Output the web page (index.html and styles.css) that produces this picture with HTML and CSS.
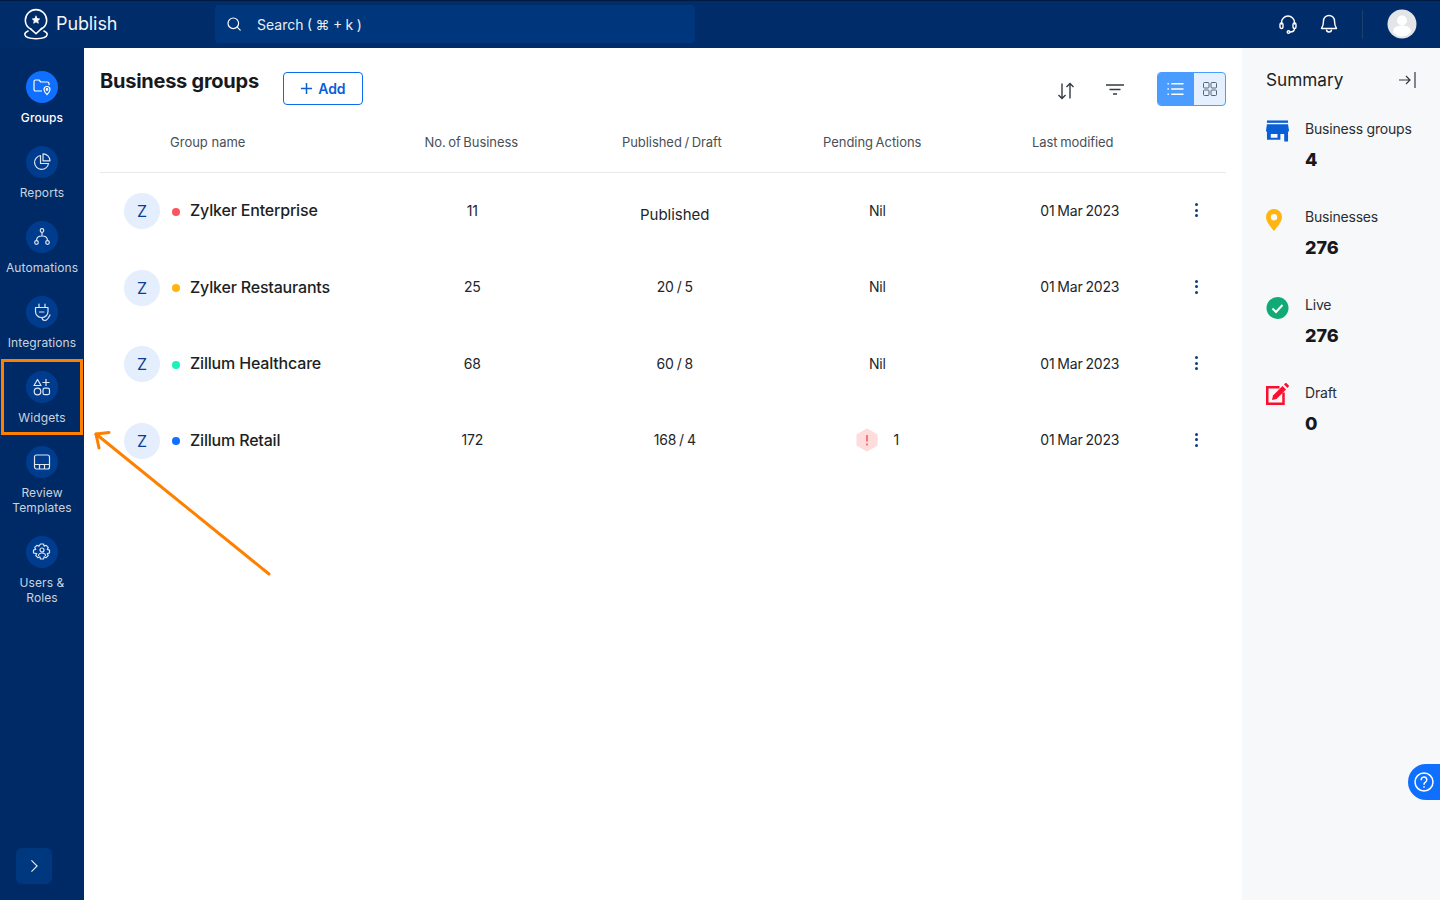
FILE: index.html
```html
<!DOCTYPE html>
<html lang="en">
<head>
<meta charset="utf-8">
<title>Publish - Business groups</title>
<link rel="stylesheet" href="styles.css">
</head>
<body>
<header class="topbar">
  <div class="brand">
    <svg class="logo" viewBox="0 0 28 34" fill="none" stroke="#fff" stroke-width="1.7" stroke-linecap="round" stroke-linejoin="round"><path d="M8.5 22.5C4.5 20.5 2.5 17 2.5 13A11.5 11.5 0 0 1 25.500 13c0 4-2 7.500-6 9.500"/><path d="M8.500 22.500 14 27.500l6.500-6"/><path d="M5.500 24.500C3 25.500 1.800 27 2 28.500c.5 2.800 6 4.300 12 4.300s11.500-1.500 12-4.300c.2-1.500-1-3-3.500-4"/><path d="m14 8.500 1.200 2.700 2.800.3-2.100 1.900.6 2.800-2.500-1.500-2.500 1.500.6-2.800-2.100-1.900 2.800-.3z" fill="#fff" stroke-width=".8"/></svg>
    <span class="brand-name">Publish</span>
  </div>
  <div class="search">
    <svg class="search-icon" viewBox="0 0 16 16" fill="none" stroke="#fff" stroke-width="1.2" stroke-linecap="round"><circle cx="7.300" cy="7.300" r="5.300"/><path d="m11.200 11.200 3 3"/></svg>
    <span>Search ( ⌘ + k )</span>
  </div>
  <div class="top-actions">
    <svg class="top-icon" viewBox="0 0 18 20" fill="none" stroke="#fff" stroke-width="1.400" stroke-linecap="round"><path d="M2.500 10V8.500a6.500 6.500 0 0 1 13 0V10"/><rect x="1" y="9" width="3" height="5.500" rx="1.500"/><rect x="14" y="9" width="3" height="5.500" rx="1.500"/><path d="M15.500 14.500c0 2.500-2 3.500-4.500 3.500"/><circle cx="9.500" cy="18" r="1.300"/></svg>
    <svg class="top-icon bell" viewBox="0 0 18 20" fill="none" stroke="#fff" stroke-width="1.400" stroke-linejoin="round"><path d="M9 1.500a5.500 5.500 0 0 0-5.500 5.500c0 4-.6 5.500-2 7.500h15c-1.400-2-2-3.500-2-7.500A5.500 5.500 0 0 0 9 1.500Z"/><path d="M6.500 15.500a2.500 2.500 0 0 0 5 0"/></svg>
    <span class="top-divider"></span>
    <svg class="avatar-top" viewBox="0 0 30 30"><circle cx="15" cy="15" r="14.500" fill="#e3e5e9"/><circle cx="15" cy="11.500" r="5" fill="#fff"/><path d="M6 23c0-4.500 4-6.500 9-6.500s9 2 9 6.500c-2.500 3-5.500 4.500-9 4.500S8.500 26 6 23Z" fill="#fff"/></svg>
  </div>
</header>

<div class="shell">
  <nav class="sidebar">
    <a class="nav-item active">
      <span class="nav-circle"><svg viewBox="0 0 20 20" fill="none" stroke="#fff" stroke-width="1.200" stroke-linejoin="round"><path d="M10 14H3.500A1.500 1.500 0 0 1 2 12.500v-8A1.500 1.500 0 0 1 3.500 3H7l1.800 2h6.700A1.500 1.500 0 0 1 17 6.500V8"/><path d="M15 9.500a3 3 0 0 0-3 3c0 2 3 5 3 5s3-3 3-5a3 3 0 0 0-3-3Z"/><circle cx="15" cy="12.500" r=".8"/></svg></span>
      <span class="nav-label">Groups</span>
    </a>
    <a class="nav-item">
      <span class="nav-circle"><svg viewBox="0 0 20 20" fill="none" stroke="#dfe6f0" stroke-width="1.200" stroke-linejoin="round"><path d="M8.500 3.500a7 7 0 1 0 8 8h-8z"/><path d="M11 1.800a7 7 0 0 1 7 7h-7z"/></svg></span>
      <span class="nav-label">Reports</span>
    </a>
    <a class="nav-item">
      <span class="nav-circle"><svg viewBox="0 0 20 20" fill="none" stroke="#dfe6f0" stroke-width="1.200"><circle cx="10" cy="3.500" r="1.800"/><circle cx="4.500" cy="15.500" r="1.800"/><circle cx="15.500" cy="15.500" r="1.800"/><path d="M10 5.300V9M4.500 13.700c0-3 2-4.700 5.500-4.700s5.500 1.700 5.500 4.700"/></svg></span>
      <span class="nav-label">Automations</span>
    </a>
    <a class="nav-item">
      <span class="nav-circle"><svg viewBox="0 0 20 20" fill="none" stroke="#dfe6f0" stroke-width="1.200" stroke-linecap="round"><path d="M7 2v3.500M13 2v3.500M3.500 5.500h12.500v4a6 6 0 0 1-6 6h-.5a6 6 0 0 1-6-6z" stroke-linejoin="round"/><path d="M7.500 10h4.500"/><path d="M10 15.500c0 2.500 1.500 3 3 3s3-1.500 5-5.500"/></svg></span>
      <span class="nav-label">Integrations</span>
    </a>
    <a class="nav-item highlighted">
      <span class="nav-circle"><svg viewBox="0 0 20 20" fill="none" stroke="#dfe6f0" stroke-width="1.200" stroke-linejoin="round"><path d="M5.500 2.500 9 8.500H2z"/><path d="M14 2v7M10.500 5.500h7"/><circle cx="5.500" cy="14.500" r="3.300"/><rect x="11" y="11.200" width="6.500" height="6.500" rx="1.800"/></svg></span>
      <span class="nav-label">Widgets</span>
    </a>
    <a class="nav-item">
      <span class="nav-circle"><svg viewBox="0 0 20 20" fill="none" stroke="#dfe6f0" stroke-width="1.200"><rect x="2.500" y="3" width="15" height="14" rx="2"/><path d="M2.500 12.500h15M7.500 12.500V17M12.500 12.500V17"/></svg></span>
      <span class="nav-label">Review Templates</span>
    </a>
    <a class="nav-item">
      <span class="nav-circle"><svg viewBox="0 0 20 20" fill="none" stroke="#dfe6f0" stroke-width="1.200" stroke-linejoin="round"><path d="M8.500 2h3l.6 2.200 2-.9 2.100 2.100-.9 2 2.200.6v3l-2.200.6.900 2-2.100 2.100-2-.9-.6 2.200h-3l-.6-2.200-2 .9-2.100-2.100.9-2L1.500 11V8l2.200-.6-.9-2 2.100-2.100 2 .9z"/><circle cx="10" cy="8" r="2"/><path d="M6.500 14c0-2 1.500-3 3.500-3s3.500 1 3.500 3"/></svg></span>
      <span class="nav-label">Users &amp; Roles</span>
    </a>
    <button class="expand" type="button" aria-label="Expand"><svg viewBox="0 0 10 16" fill="none" stroke="#e8edf5" stroke-width="1.300"><path d="m1.500 1.500 6.500 6.500-6.500 6.500"/></svg></button>
  </nav>

  <main class="content">
    <div class="toolbar">
      <h1 class="title">Business groups</h1>
      <button class="add" type="button"><svg viewBox="0 0 14 14" fill="none" stroke="#0a5fd6" stroke-width="1.600"><path d="M7 1v12M1 7h12"/></svg>Add</button>
      <div class="tools">
        <svg class="sort" viewBox="0 0 18 18" fill="none" stroke="#333a45" stroke-width="1.400"><path d="M5 1.500v15M1.500 13 5 16.500 8.500 13M13 16.500v-15M9.500 5 13 1.500 16.500 5"/></svg>
        <svg class="filter" viewBox="0 0 18 12" fill="none" stroke="#333a45" stroke-width="1.500"><path d="M0 1h18M3.500 5.500h11M7 10h4"/></svg>
        <div class="toggle">
          <span class="toggle-btn on"><svg viewBox="0 0 18 14" fill="none" stroke="#fff" stroke-width="1.500"><path d="M4.500 1.500H17.500M4.500 7H17.500M4.500 12.500H17.500M.5 1.500h1.500M.5 7h1.500M.5 12.500h1.500"/></svg></span>
          <span class="toggle-btn"><svg viewBox="0 0 14 14" fill="none" stroke="#5a6470" stroke-width="1"><rect x=".5" y=".5" width="5.500" height="5.500" rx="1"/><rect x="8" y=".5" width="5.500" height="5.500" rx="1"/><rect x=".5" y="8" width="5.500" height="5.500" rx="1"/><rect x="8" y="8" width="5.500" height="5.500" rx="1"/></svg></span>
        </div>
      </div>
    </div>

    <div class="table-head">
      <span class="head-name">Group name</span>
      <span>No. of Business</span>
      <span>Published / Draft</span>
      <span>Pending Actions</span>
      <span>Last modified</span>
    </div>

    <div class="row">
      <div class="name-cell"><span class="initial">Z</span><span class="dot red"></span><span class="name">Zylker Enterprise</span></div>
      <span class="cell">11</span>
      <span class="cell published">Published</span>
      <span class="cell">Nil</span>
      <span class="cell">01 Mar 2023</span>
      <span class="more"><i></i><i></i><i></i></span>
    </div>
    <div class="row">
      <div class="name-cell"><span class="initial">Z</span><span class="dot amber"></span><span class="name">Zylker Restaurants</span></div>
      <span class="cell">25</span>
      <span class="cell">20 / 5</span>
      <span class="cell">Nil</span>
      <span class="cell">01 Mar 2023</span>
      <span class="more"><i></i><i></i><i></i></span>
    </div>
    <div class="row">
      <div class="name-cell"><span class="initial">Z</span><span class="dot mint"></span><span class="name">Zillum Healthcare</span></div>
      <span class="cell">68</span>
      <span class="cell">60 / 8</span>
      <span class="cell">Nil</span>
      <span class="cell">01 Mar 2023</span>
      <span class="more"><i></i><i></i><i></i></span>
    </div>
    <div class="row">
      <div class="name-cell"><span class="initial">Z</span><span class="dot blue"></span><span class="name">Zillum Retail</span></div>
      <span class="cell">172</span>
      <span class="cell">168 / 4</span>
      <span class="cell pending"><svg viewBox="0 0 22 24"><path d="M11 .5 21.500 6.300v11.400L11 23.500.5 17.700V6.300z" fill="#ffdcdc"/><path d="M11 7v6.500M11 15.500v2" stroke="#f9505a" stroke-width="1.500" fill="none"/></svg><span>1</span></span>
      <span class="cell">01 Mar 2023</span>
      <span class="more"><i></i><i></i><i></i></span>
    </div>
  </main>

  <aside class="summary">
    <div class="summary-head">
      <h2>Summary</h2>
      <svg viewBox="0 0 17 16" fill="none" stroke="#333a45" stroke-width="1.200"><path d="M0 8h11M7 4l4 4-4 4M16 0v16"/></svg>
    </div>
    <div class="stat">
      <svg class="stat-icon store" viewBox="0 0 24 22"><path d="M1 0h22v2.500H1z" fill="#0a5fd6"/><path d="M1 4h22l1 6.500c0 1-.8 1.500-1.500 1.500H1.500C.8 12 0 11.500 0 10.500z" fill="#0a5fd6"/><path fill-rule="evenodd" d="M1 11h22v11h-4v-8h-4v6H1zm4 3v4h7v-4z" fill="#0a5fd6"/></svg>
      <div><div class="stat-label">Business groups</div><div class="stat-value">4</div></div>
    </div>
    <div class="stat">
      <svg class="stat-icon pin" viewBox="0 0 16 22"><path fill-rule="evenodd" d="M8 0a8 8 0 0 0-8 8c0 5 5 10 8 14 3-4 8-9 8-14a8 8 0 0 0-8-8Zm0 5a3.200 3.200 0 1 1 0 6.400A3.200 3.200 0 0 1 8 5Z" fill="#ffb511"/></svg>
      <div><div class="stat-label">Businesses</div><div class="stat-value">276</div></div>
    </div>
    <div class="stat">
      <svg class="stat-icon" viewBox="0 0 22 22"><circle cx="11" cy="11" r="11" fill="#10ab74"/><path d="m6 11.500 3.500 3.500 6.500-7" fill="none" stroke="#fff" stroke-width="2"/></svg>
      <div><div class="stat-label">Live</div><div class="stat-value">276</div></div>
    </div>
    <div class="stat">
      <svg class="stat-icon draft" viewBox="0 0 23 23"><path d="M13.500 4.250H1.250V20.750H17.500V9.500" fill="none" stroke="#fb0f2f" stroke-width="2.500"/><path d="m6 17 1-4.500L16.500 3l3.500 3.500L10.500 16z" fill="#fb0f2f"/><path d="M18 1.500 19.200.3c.4-.4 1-.4 1.400 0l2 2c.4.4.4 1 0 1.400L21.500 5z" fill="#fb0f2f"/></svg>
      <div><div class="stat-label">Draft</div><div class="stat-value">0</div></div>
    </div>
  </aside>
</div>

<svg class="arrow" viewBox="0 0 180 150" fill="none" stroke="#ff8000" stroke-width="3" stroke-linecap="round" stroke-linejoin="round"><path d="M175 143 2 3"/><path d="M15 1.500 2 3l3 14"/></svg>
<button class="help" type="button" aria-label="Help"><svg viewBox="0 0 20 20" fill="none" stroke="#fff" stroke-width="1.500"><circle cx="10" cy="10" r="9"/><path d="M7.200 7.800a2.800 2.800 0 1 1 4.300 2.300c-1 .6-1.500 1.100-1.500 2.200" stroke-linecap="round"/><path d="M10 14.200v1.500"/></svg></button>
</body>
</html>
```

FILE: styles.css
```css
*, *::before, *::after { box-sizing: border-box; }
html, body { margin: 0; height: 100%; }
body {
  font-family: Inter, "Noto Sans", "Liberation Sans", sans-serif;
  color: #1c1f24;
  background: #fff;
  overflow: hidden;
  height: 900px;
  display: flex;
  flex-direction: column;
}
h1, h2 { margin: 0; }
button { font-family: inherit; cursor: pointer; }

/* Top bar */
.topbar {
  height: 48px;
  flex: none;
  display: flex;
  align-items: center;
  background: #002d69;
  border-top: 1px solid #001b42;
  padding-bottom: 1px;
  color: #fff;
}
.brand {
  width: 215px;
  display: flex;
  align-items: center;
  padding-left: 23px;
  flex: none;
}
.logo { width: 26px; height: 32px; flex: none; }
.brand-name { margin: 0 0 1px 7px; font-size: 18px; letter-spacing: -0.1px; color: #f1f4f8; }
.search {
  width: 480px;
  height: 38px;
  background: #00367c;
  border-radius: 4px;
  display: flex;
  align-items: center;
  padding-left: 11px;
  font-size: 14px;
  word-spacing: -0.5px;
  color: #e9eef5;
  flex: none;
}
.search-icon { width: 16px; height: 16px; margin-right: 15px; }
.top-actions {
  margin-left: auto;
  display: flex;
  align-items: center;
  padding-right: 23px;
}
.top-icon { width: 18px; height: 20px; }
.bell { margin-left: 23px; }
.top-divider { width: 1px; height: 29px; background: #1c3f70; margin: 0 24px; }
.avatar-top { width: 30px; height: 30px; }

/* Shell */
.shell { flex: 1; display: flex; min-height: 0; }

/* Sidebar */
.sidebar {
  width: 84px;
  flex: none;
  background: #002a66;
  padding-top: 23px;
  display: flex;
  flex-direction: column;
  align-items: center;
}
.nav-item {
  position: relative;
  width: 84px;
  padding: 0 6px 21px;
  display: flex;
  flex-direction: column;
  align-items: center;
  text-align: center;
}
.nav-circle {
  width: 32px;
  height: 32px;
  border-radius: 50%;
  background: #003c8e;
  display: flex;
  align-items: center;
  justify-content: center;
}
.nav-circle svg { width: 20px; height: 20px; }
.nav-label {
  margin-top: 7px;
  font-size: 12px;
  line-height: 15px;
  letter-spacing: 0.1px;
  color: #cbd3df;
}
.nav-item:nth-child(3) { padding-left: 0; padding-right: 0; }
.active .nav-circle { background: #0f6fff; }
.active .nav-label { color: #fff; font-weight: 500; }
.highlighted::after {
  content: "";
  position: absolute;
  left: 1px;
  top: -12px;
  width: 82px;
  height: 76px;
  border: 3px solid #ff8000;
}
.expand {
  margin: auto 0 16px 16px;
  align-self: flex-start;
  width: 36px;
  height: 36px;
  border: 0;
  border-radius: 6px;
  background: #00387f;
  display: flex;
  align-items: center;
  justify-content: center;
  padding: 0;
}
.expand svg { width: 9px; height: 14px; }

/* Content */
.content {
  flex: 1;
  min-width: 0;
  padding: 24px 16px 0;
}
.toolbar { display: flex; align-items: flex-start; height: 34px; }
.title {
  font-size: 20px;
  line-height: 18px;
  font-weight: 700;
  letter-spacing: -0.25px;
  color: #17191d;
  white-space: nowrap;
}
.add {
  margin-left: 24px;
  width: 80px;
  height: 33px;
  background: #fff;
  border: 1px solid #0a6bf0;
  border-radius: 4px;
  color: #0a5fd6;
  font-size: 14px;
  font-weight: 600;
  display: flex;
  align-items: center;
  justify-content: center;
  gap: 5px;
  padding: 0;
}
.add svg { width: 13px; height: 13px; }
.tools { margin-left: auto; display: flex; align-items: flex-start; }
.sort { width: 18px; height: 18px; margin-top: 10px; }
.filter { width: 18px; height: 12px; margin: 12px 0 0 31px; }
.toggle {
  margin-left: 33px;
  width: 69px;
  height: 34px;
  display: flex;
  border: 1px solid #4a9dff;
  border-radius: 4px;
  overflow: hidden;
  background: #e4f0ff;
}
.toggle-btn { flex: 1; display: flex; align-items: center; justify-content: center; }
.toggle-btn.on { background: #4a9dff; flex: none; width: 36px; padding-right: 2px; }
.toggle-btn svg { width: 14px; height: 14px; }
.toggle-btn.on svg { width: 17px; height: 14px; }

/* Table */
.table-head {
  height: 67px;
  padding-top: 5px;
  display: grid;
  grid-template-columns: 271px repeat(4, 200.5px) 1fr;
  align-items: center;
  border-bottom: 1px solid #e8e9eb;
  font-size: 13px;
  word-spacing: -1px;
  letter-spacing: -0.05px;
  color: #4a4f57;
  text-align: center;
}
.head-name { text-align: left; padding-left: 70px; word-spacing: 0; letter-spacing: 0; }
.row {
  height: 76.5px;
  padding-right: 15px;
  display: grid;
  grid-template-columns: 271px repeat(4, 202.500px) 1fr;
  align-items: center;
  font-size: 14px;
  color: #22252a;
}
.name-cell { display: flex; align-items: center; padding-left: 24px; }
.initial {
  width: 36px;
  height: 36px;
  border-radius: 50%;
  background: #e4eefc;
  color: #0b3d91;
  font-size: 16px;
  display: flex;
  align-items: center;
  justify-content: center;
  flex: none;
}
.dot { width: 8px; height: 8px; border-radius: 50%; margin: 1px 10px 0 12px; flex: none; }
.red { background: #fb5560; }
.amber { background: #ffb511; }
.mint { background: #1cf0bb; }
.blue { background: #0f6fff; }
.name { font-size: 16px; font-weight: 500; letter-spacing: -0.18px; color: #1c1f24; white-space: nowrap; margin-bottom: 2px; }
.cell { text-align: center; letter-spacing: -0.2px; word-spacing: -0.8px; margin-bottom: 2px; }
.published { font-size: 15px; margin: 6px 0 0; letter-spacing: 0; }
.pending { display: flex; align-items: center; justify-content: center; gap: 16px; }
.pending svg { width: 22px; height: 24px; }
.more { display: flex; flex-direction: column; align-items: center; gap: 2.500px; margin-bottom: 2px; }
.more i { width: 3px; height: 3px; border-radius: 50%; background: #0b3d80; }

/* Summary */
.summary {
  width: 198px;
  flex: none;
  background: #f7f8f9;
  padding: 20px 24px 0;
}
.summary-head {
  display: flex;
  align-items: center;
  justify-content: space-between;
  height: 22px;
  margin-bottom: 28px;
}
.summary-head h2 { font-size: 17.200px; font-weight: 400; color: #1c1f24; }
.summary-head svg { width: 17px; height: 16px; margin-top: 2px; }
.stat { display: flex; align-items: flex-start; height: 88px; }
.stat-icon { width: 23px; height: 22px; margin: 3px 16px 0 0; flex: none; }
.stat-icon.store { margin-top: 2px; }
.stat-icon.pin { width: 16px; height: 22px; margin-right: 23px; }
.stat-icon.draft { height: 23px; margin-top: 1px; }
.stat-label { font-size: 14px; line-height: 20px; letter-spacing: -0.2px; color: #2a2d33; white-space: nowrap; margin-top: 1px; }
.stat-value { font-size: 18px; line-height: 24px; font-weight: 800; color: #17191d; margin-top: 9px; }

/* Overlays */
.arrow {
  position: absolute;
  left: 94px;
  top: 431px;
  width: 180px;
  height: 150px;
}
.help {
  position: absolute;
  left: 1408px;
  top: 764px;
  width: 32px;
  height: 36px;
  border: 0;
  padding: 0 0 0 6px;
  background: #0f6fff;
  border-radius: 18px 0 0 18px;
  display: flex;
  align-items: center;
  justify-content: flex-start;
}
.help svg { width: 20px; height: 20px; }
```
